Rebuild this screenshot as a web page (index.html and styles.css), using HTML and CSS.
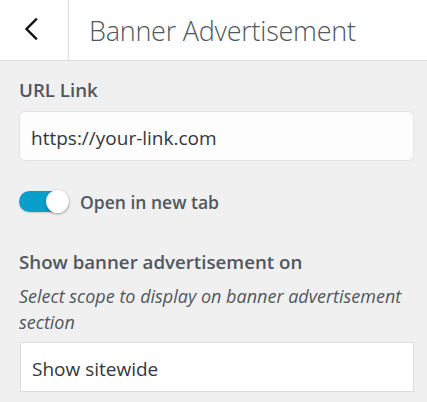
FILE: index.html
```html
<!DOCTYPE html>
<html lang="en">
<head>
<meta charset="utf-8">
<title>Banner Advertisement</title>
<link rel="stylesheet" href="styles.css">
</head>
<body>
<div class="panel">
  <header class="header">
    <button class="back" aria-label="Back">
      <svg width="14" height="22" viewBox="0 0 14 22" aria-hidden="true">
        <polyline points="12,1.5 2.5,11 12,20.5" fill="none" stroke="#111" stroke-width="2.4" stroke-linecap="square" stroke-linejoin="miter"/>
      </svg>
    </button>
    <h1 class="title">Banner Advertisement</h1>
  </header>
  <main class="content">
    <label class="field-label">URL Link</label>
    <div class="text-input">https://your-link.com</div>

    <div class="toggle-row">
      <span class="toggle"><span class="knob"></span></span>
      <span class="toggle-label">Open in new tab</span>
    </div>

    <div class="field-label label-scope">Show banner advertisement on</div>
    <p class="description">Select scope to display on banner advertisement section</p>
    <div class="select">Show sitewide</div>
  </main>
</div>
</body>
</html>
```

FILE: styles.css
```css
* { box-sizing: border-box; }
html, body { margin: 0; padding: 0; }
body {
  width: 427px;
  height: 402px;
  overflow: hidden;
  background: #f0f0f0;
  font-family: "Open Sans", "Noto Sans", sans-serif;
  color: #50575e;
}
.panel { display: flex; flex-direction: column; }
.header {
  display: flex;
  height: 61px;
  background: #fff;
  border-bottom: 1px solid #dcdcde;
}
.back {
  width: 69px;
  border: 0;
  border-right: 1px solid #dcdcde;
  background: #fff;
  padding: 0 0 2px 24px;
  display: flex;
  align-items: center;
}
.title {
  margin: 0;
  padding: 2px 0 0 20px;
  font-size: 27px;
  font-weight: 300;
  line-height: 58px;
  color: #50575e;
  letter-spacing: -0.25px;
}
.content {
  padding: 17px 13px 0 19px;
  display: flex;
  flex-direction: column;
}
.field-label {
  font-size: 18.7px;
  font-weight: 600;
  line-height: 24px;
  color: #50575e;
}
.text-input {
  margin-top: 9px;
  height: 50px;
  border: 1px solid #e2e4e7;
  border-radius: 6px;
  background: #fdfdfe;
  padding: 3px 0 0 11px;
  display: flex;
  align-items: center;
  font-size: 19px;
  color: #32373c;
}
.toggle-row {
  margin-top: 29px;
  display: flex;
  align-items: center;
  gap: 11px;
  height: 23px;
}
.toggle {
  width: 50px;
  height: 21px;
  border-radius: 11px;
  background: #0a9ecb;
  display: flex;
  justify-content: flex-end;
  align-items: center;
  box-shadow: 0 1px 2px rgba(0,0,0,0.15);
}
.knob {
  width: 23px;
  height: 23px;
  border-radius: 50%;
  background: #fff;
  box-shadow: 0 1px 3px rgba(0,0,0,0.3);
}
.toggle-label {
  font-size: 17.5px;
  font-weight: 600;
  color: #50575e;
}
.label-scope { margin-top: 37px; }
.description {
  margin: 9px 0 0 0;
  font-size: 18px;
  font-style: italic;
  line-height: 26px;
  color: #50575e;
}
.select {
  margin-top: 7px;
  margin-left: 1px;
  height: 50px;
  border: 1px solid #dcdcde;
  background: #fff;
  padding: 3px 0 0 11px;
  display: flex;
  align-items: center;
  font-size: 19px;
  color: #32373c;
}
```
